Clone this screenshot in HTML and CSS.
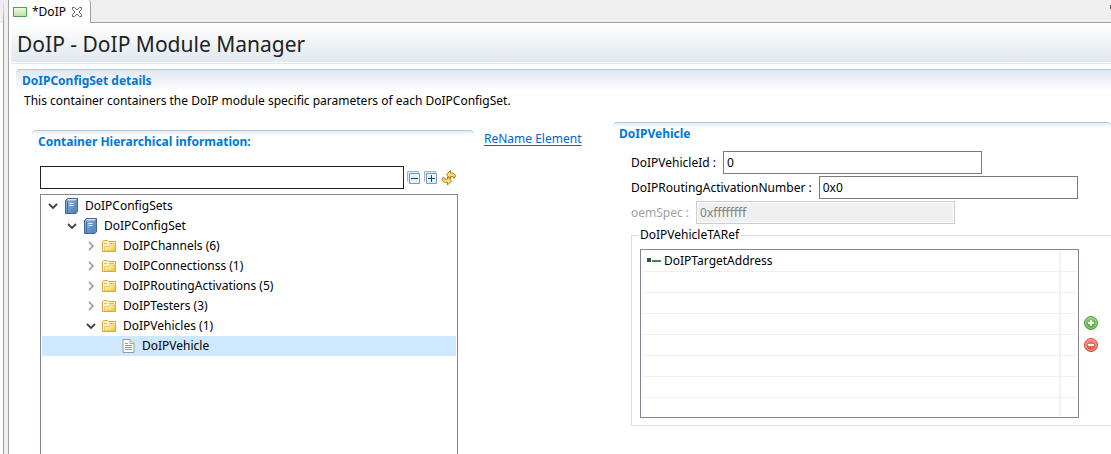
FILE: index.html
```html
<!DOCTYPE html>
<html lang="en">
<head>
<meta charset="utf-8">
<title>DoIP</title>
<link rel="stylesheet" href="styles.css">
</head>
<body>
<svg class="defs" aria-hidden="true">
  <defs>
    <linearGradient id="gBook" x1="0" y1="0" x2="1" y2="1"><stop offset="0" stop-color="#8db4dc"/><stop offset="1" stop-color="#4a80ba"/></linearGradient>
    <linearGradient id="gFolder" x1="0" y1="0" x2="1" y2="1"><stop offset="0" stop-color="#fffbe0"/><stop offset="1" stop-color="#f2c62c"/></linearGradient>
    <linearGradient id="gAdd" x1="0" y1="0" x2="0" y2="1"><stop offset="0" stop-color="#8ccf72"/><stop offset="1" stop-color="#4ba33a"/></linearGradient>
    <linearGradient id="gDel" x1="0" y1="0" x2="0" y2="1"><stop offset="0" stop-color="#f58d80"/><stop offset="1" stop-color="#e2493a"/></linearGradient>
    <linearGradient id="gTab" x1="0" y1="0" x2="0" y2="1"><stop offset="0" stop-color="#eefbe8"/><stop offset="1" stop-color="#b4e6a2"/></linearGradient>
    <symbol id="open" viewBox="0 0 10 10"><path d="M1 3l4 4 4-4" fill="none" stroke="#404040" stroke-width="1.8"/></symbol>
    <symbol id="closed" viewBox="0 0 10 10"><path d="M3 1l4 4-4 4" fill="none" stroke="#a6a6a6" stroke-width="1.8"/></symbol>
    <symbol id="book" viewBox="0 0 15 16"><path d="M1.500 2.500l2-2h10v13l-1.500 2H1.500z" fill="#5f8fc2" stroke="#41658f"/><path d="M2.500 2.500L4 1h9l-1.500 1.500z" fill="#dbe8f4"/><path d="M2 3h9.500v12H2z" fill="url(#gBook)"/><path d="M3.500 3v12" stroke="#3b6da5"/><path d="M5.500 5.500h4M5.500 7.500h4" stroke="#e2eefa"/></symbol>
    <symbol id="folder" viewBox="0 0 15 14"><path d="M.5 12.500V2.500l1-1h4l1 1h7v10z" fill="#fff5cf" stroke="#dba53f"/><path d="M2 4.500h3M7 4.500h5" stroke="#e2b658"/><path d="M2.500 12V7.500h4l1-1.500h5.500v6z" fill="url(#gFolder)" stroke="#e4b94c" stroke-width=".7"/></symbol>
    <symbol id="file" viewBox="0 0 12 14"><path d="M.5.5h7l4 4v9H.5z" fill="#fffef5" stroke="#9a9a91"/><path d="M7.500.5v4h4" fill="#eddfae" stroke="#b9aa75"/><path d="M2.500 4.500h3M2.500 6.500h7M2.500 8.500h7M2.500 10.500h7" stroke="#7f9cc7"/></symbol>
  </defs>
</svg>
<div class="workbench">
  <div class="side"></div>
  <main class="editor">
    <div class="tabs">
      <div class="tab">
        <svg class="tab-icon" width="14" height="12" viewBox="0 0 14 12"><path d="M.5 1.500h13v9H.5z" fill="url(#gTab)" stroke="#4e9e47"/><path d="M0 1.500h14" stroke="#56a84e"/></svg>
        <span>*DoIP</span>
        <button class="icon-button" aria-label="Close"><svg width="12" height="12" viewBox="0 0 12 12"><path d="M1.500 1.500h2L6 4l2.500-2.500h2v2L8 6l2.500 2.500v2h-2L6 8l-2.500 2.500h-2v-2L4 6 1.500 3.500z" fill="#fff" stroke="#606060"/></svg></button>
      </div>
      <span class="tabs-mark"></span>
    </div>
    <h1 class="title">DoIP - DoIP Module Manager</h1>
    <section class="details">
      <h2 class="heading heading-wide">DoIPConfigSet details</h2>
      <p class="description">This container containers the DoIP module specific parameters of each DoIPConfigSet.</p>
    </section>
    <div class="columns">
      <section class="hierarchy">
        <h2 class="heading">Container Hierarchical information:</h2>
        <div class="hierarchy-body">
          <div class="filter">
            <input class="filter-input" type="text" aria-label="Filter">
            <button class="icon-button" aria-label="Collapse all"><svg width="14" height="14" viewBox="0 0 14 14"><path d="M.5 10.500V.5h11v2" fill="#dceaf5" stroke="#9db4ce"/><path d="M2.500 2.500h10v10h-10z" fill="#e3f5fd" stroke="#7e97b6"/><path d="M4 7.500h7" stroke="#0b4a80"/></svg></button>
            <button class="icon-button" aria-label="Expand all"><svg width="14" height="14" viewBox="0 0 14 14"><path d="M.5 10.500V.5h11v2" fill="#dceaf5" stroke="#9db4ce"/><path d="M2.500 2.500h10v10h-10z" fill="#e3f5fd" stroke="#7e97b6"/><path d="M4 7.500h7M7.500 4v7" stroke="#0b4a80"/></svg></button>
            <button class="icon-button" aria-label="Refresh"><svg width="16" height="16" viewBox="0 0 16 16"><path d="M5.500 4.500l4-4v2.500h2q2.500.5 3 3l-1.500 2.500-1-2h-2.500V9z" fill="#fbdc7c" stroke="#b87d16"/><path d="M10.500 11l-4 4v-2.500H4.500Q1.500 12 1 9.500L2.500 7l1 2h3V6.500z" fill="#fbdc7c" stroke="#b87d16"/></svg></button>
          </div>
          <ul class="tree" role="tree">
            <li class="node level-1" role="treeitem"><svg class="arrow"><use href="#open"/></svg><svg class="node-icon"><use href="#book"/></svg>DoIPConfigSets</li>
            <li class="node level-2" role="treeitem"><svg class="arrow"><use href="#open"/></svg><svg class="node-icon"><use href="#book"/></svg>DoIPConfigSet</li>
            <li class="node level-3" role="treeitem"><svg class="arrow"><use href="#closed"/></svg><svg class="node-icon"><use href="#folder"/></svg>DoIPChannels (6)</li>
            <li class="node level-3" role="treeitem"><svg class="arrow"><use href="#closed"/></svg><svg class="node-icon"><use href="#folder"/></svg>DoIPConnectionss (1)</li>
            <li class="node level-3" role="treeitem"><svg class="arrow"><use href="#closed"/></svg><svg class="node-icon"><use href="#folder"/></svg>DoIPRoutingActivations (5)</li>
            <li class="node level-3" role="treeitem"><svg class="arrow"><use href="#closed"/></svg><svg class="node-icon"><use href="#folder"/></svg>DoIPTesters (3)</li>
            <li class="node level-3" role="treeitem"><svg class="arrow"><use href="#open"/></svg><svg class="node-icon"><use href="#folder"/></svg>DoIPVehicles (1)</li>
            <li class="node level-4 selected" role="treeitem" aria-selected="true"><svg class="arrow"></svg><svg class="node-icon file-icon"><use href="#file"/></svg>DoIPVehicle</li>
          </ul>
        </div>
      </section>
      <div class="links"><a class="rename" href="#">ReName Element</a></div>
      <section class="vehicle">
        <h2 class="heading">DoIPVehicle</h2>
        <form class="form">
          <div class="field"><label for="vid">DoIPVehicleId :</label><input id="vid" class="field-input" type="text" value="0"></div>
          <div class="field"><label for="ran">DoIPRoutingActivationNumber :</label><input id="ran" class="field-input" type="text" value="0x0"></div>
          <div class="field field-off"><label for="oem">oemSpec :</label><input id="oem" class="field-input" type="text" value="0xffffffff" disabled></div>
          <fieldset class="group">
            <legend>DoIPVehicleTARef</legend>
            <div class="group-body">
              <table class="refs">
                <colgroup><col><col class="refs-end"></colgroup>
                <tbody>
                <tr><td><svg class="ref-icon" width="15" height="8" viewBox="0 0 15 8"><path d="M1 1h4v4H1z" fill="#36533c"/><path d="M6 4h9" stroke="#4f8058" stroke-width="2"/></svg>DoIPTargetAddress</td><td></td></tr>
                <tr><td></td><td></td></tr>
                <tr><td></td><td></td></tr>
                <tr><td></td><td></td></tr>
                <tr><td></td><td></td></tr>
                <tr><td></td><td></td></tr>
                <tr><td></td><td></td></tr>
                <tr><td></td><td></td></tr>
                </tbody>
              </table>
              <div class="actions">
                <button type="button" class="icon-button" aria-label="Add"><svg width="14" height="14" viewBox="0 0 14 14"><circle cx="7" cy="7" r="6.500" fill="url(#gAdd)" stroke="#4c9a3e"/><circle cx="7" cy="7" r="5.300" fill="none" stroke="#b4e0a4" stroke-width=".8"/><path d="M7 4v6M4 7h6" stroke="#fff" stroke-width="2"/></svg></button>
                <button type="button" class="icon-button" aria-label="Remove"><svg width="14" height="14" viewBox="0 0 14 14"><circle cx="7" cy="7" r="6.500" fill="url(#gDel)" stroke="#cd4a3c"/><circle cx="7" cy="7" r="5.300" fill="none" stroke="#f9b8ae" stroke-width=".8"/><path d="M4 7h6" stroke="#fff" stroke-width="2"/></svg></button>
              </div>
            </div>
          </fieldset>
        </form>
      </section>
    </div>
  </main>
</div>
</body>
</html>
```
FILE: styles.css
```css
* { box-sizing: border-box; }
body {
  margin: 0;
  height: 100vh;
  overflow: hidden;
  background: #efefef;
  color: #000;
  font: 12px/20px "Noto Sans", "Open Sans", sans-serif;
}
h1, h2, p, ul { margin: 0; padding: 0; }
.defs { position: absolute; width: 0; height: 0; }
svg { display: block; flex: none; }
.icon-button { padding: 0; border: 0; background: none; line-height: 0; }

.workbench { display: flex; gap: 4px; height: 100%; }
.side { flex: none; width: 4px; background: #fff; border-top: 23px solid #efefef; border-right: 1px solid #a0a0a0; }
.editor { flex: 1; min-width: 0; display: flex; flex-direction: column; background: #fff; border-left: 1px solid #a0a0a0; }

.tabs { flex: none; display: flex; justify-content: space-between; height: 23px; background: linear-gradient(#a0a0a0, #a0a0a0) bottom / 100% 1px no-repeat #efefef; }
.tab { display: flex; align-items: center; gap: 5px; padding: 0 7px 0 4px; background: #fff; border-right: 1px solid #a0a0a0; border-radius: 0 3px 0 0; }
.tabs-mark { width: 1px; height: 4px; margin-top: 5px; background: #606060; }

.title {
  flex: none;
  height: 41px;
  margin-left: 2px;
  padding-left: 6px;
  border-bottom: 1px solid #e1e7f0;
  background: linear-gradient(#fff, #eef2f5 60%, #e1e8f2) top / 100% 39px no-repeat;
  color: #222;
  font: 21px/43px "Noto Sans", sans-serif;
}

.details { flex: none; margin: 5px 0 0 7px; }
.heading {
  height: 22px;
  padding-left: 6px;
  border: 1px solid #b6cade;
  border-width: 1px 0 0;
  border-radius: 4px 4px 0 0;
  background: linear-gradient(#e6eef6, #fff) top / 100% 6px no-repeat;
  color: #0078d7;
  font-size: 12px;
  line-height: 21px;
}
.heading-wide { border-radius: 4px 0 0; background: linear-gradient(#dfe8f1, #fff); }
.description { padding-left: 8px; line-height: 20px; }

.columns { flex: 1; min-height: 0; display: grid; grid-template-columns: 442fr 139px 498fr; padding: 11px 0 0 23px; }
.hierarchy { display: flex; flex-direction: column; min-height: 0; padding-top: 8px; }
.hierarchy-body { flex: 1; min-height: 0; display: flex; flex-direction: column; gap: 5px; padding: 14px 16px 0 8px; }
.filter { display: flex; align-items: center; gap: 3px; padding-right: 1px; }
.filter-input { flex: 1; min-width: 0; height: 23px; border: 1px solid #222; }
.tree { flex: 1; min-height: 0; overflow: hidden; padding: 1px; border: 1px solid #828790; border-bottom: 0; list-style: none; }
.node { display: flex; align-items: center; height: 20px; }
.level-1 { padding-left: 6px; }
.level-2 { padding-left: 25px; }
.level-3 { padding-left: 44px; }
.level-4 { padding-left: 63px; }
.selected { background: #cde8ff; }
.arrow { width: 10px; height: 10px; margin-right: 6px; }
.node-icon { width: 15px; height: 16px; margin-right: 6px; }
.file-icon { height: 14px; }

.links { padding: 7px 0 0 10px; }
.rename { color: #0066cc; font-size: 12px; text-underline-offset: 2px; }

.form { padding: 7px 0 0 18px; }
.field { display: flex; gap: 7px; height: 23px; margin-bottom: 2px; line-height: 23px; }
.field-input { width: 259px; border: 1px solid #7a7a7a; padding: 0 3px; font: inherit; color: #000; background: #fff; }
.field-off { color: #a0a0a0; }
.field-off .field-input { border-color: #ccc; background: #f0f0f0; color: #808080; box-shadow: inset 0 0 0 1px #fff; }
.group { margin: 0; padding: 5px 0 7px 8px; border: 1px solid #dcdcdc; border-right: 0; min-width: 0; }
.group legend { padding: 0 2px; margin-left: -2px; line-height: 18px; }
.group-body { display: flex; align-items: center; gap: 5px; padding-right: 13px; }
.refs { flex: 1; table-layout: fixed; border: 1px solid #828790; border-spacing: 0; padding: 1px; }
.refs-end { width: 16px; }
.refs td { height: 21px; padding: 0 4px; border-bottom: 1px solid #f0f0f0; line-height: 20px; }
.refs td:first-child { border-right: 2px solid #f0f0f6; }
.refs tr:last-child td { border-bottom: 0; height: 18px; }
.ref-icon { display: inline-block; margin-right: 3px; }
.actions { display: flex; flex-direction: column; gap: 8px; }
```
